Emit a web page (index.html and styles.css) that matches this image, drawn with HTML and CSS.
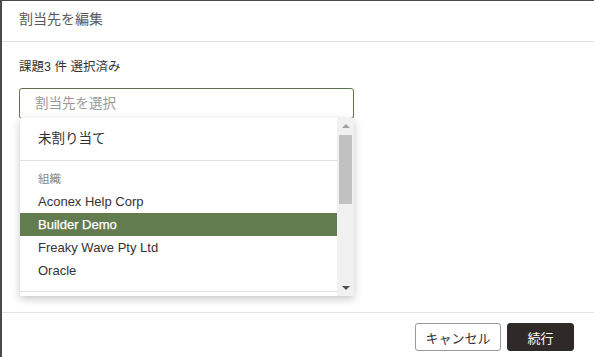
FILE: index.html
```html
<!DOCTYPE html>
<html lang="ja">
<head>
    <meta charset="UTF-8" />
    <meta name="viewport" content="width=device-width, initial-scale=1" />
    <title>割当先を編集</title>
    <link rel="stylesheet" href="styles.css">
</head>
<body>

    <div class="dialogo">
        <div class="cabecera">割当先を編集</div>

        <div class="cuerpo">
            <p class="seleccionados">課題3 件 選択済み</p>

            <div class="selector">
                <div class="campo">割当先を選択</div>

                <div class="menu">
                    <div class="lista">
                        <div class="opcion primera">未割り当て</div>
                        <div class="separador"></div>
                        <div class="grupo">組織</div>
                        <div class="opcion">Aconex Help Corp</div>
                        <div class="opcion activa">Builder Demo</div>
                        <div class="opcion">Freaky Wave Pty Ltd</div>
                        <div class="opcion">Oracle</div>
                        <div class="separador final"></div>
                    </div>
                    <div class="barra">
                        <span class="flecha arriba"></span>
                        <span class="pulgar"></span>
                        <span class="flecha abajo"></span>
                    </div>
                </div>
            </div>
        </div>

        <div class="pie">
            <button class="boton secundario">キャンセル</button>
            <button class="boton primario">続行</button>
        </div>
    </div>

</body>
</html>
```

FILE: styles.css
```css
body {
    font-family: "Liberation Sans", "Noto Sans CJK JP", sans-serif;
    background-color: #4a4a4a;
    margin: 0;
    padding: 1px 0 0 2px;
    color: #333;
    overflow: hidden;
}

.dialogo {
    background-color: white;
    width: 592px;
    height: 356px;
    display: flex;
    flex-direction: column;
}

.cabecera {
    height: 40px;
    line-height: 36px;
    padding-left: 17px;
    font-size: 14px;
    color: #5a5a5a;
    border-bottom: 1px solid #e2e2e2;
}

.cuerpo {
    flex: 1;
    padding: 0 17px;
}

.seleccionados {
    margin: 16px 0 0;
    font-size: 12.5px;
    line-height: 18px;
    color: #333;
}

.selector {
    position: relative;
    width: 335px;
    margin-top: 12px;
}

.campo {
    height: 29px;
    line-height: 29px;
    border: 1px solid #5e7250;
    border-radius: 3px;
    padding-left: 15px;
    font-size: 13.5px;
    color: #999;
}

.menu {
    position: absolute;
    top: 30px;
    left: 1px;
    width: 334px;
    height: 178px;
    background-color: white;
    display: flex;
    box-shadow: 0 3px 8px rgba(0, 0, 0, 0.22);
    overflow: hidden;
}

.lista {
    flex: 1;
}

.opcion {
    height: 23px;
    line-height: 23px;
    padding-left: 18px;
    font-size: 13px;
    color: #333;
}

.opcion.primera {
    height: 42px;
    line-height: 42px;
    font-size: 13.5px;
}

.opcion.activa {
    background-color: #627b4f;
    color: white;
    -webkit-text-stroke: 0.25px white;
}

.separador {
    height: 1px;
    background-color: #e0e0e0;
}

.separador.final {
    margin-top: 9px;
}

.grupo {
    padding: 9px 0 0 18px;
    height: 20px;
    line-height: 18px;
    font-size: 11.5px;
    color: #888;
}

.barra {
    width: 17px;
    background-color: #f1f1f1;
    display: flex;
    flex-direction: column;
    align-items: center;
}

.flecha {
    width: 0;
    height: 0;
    border-left: 4px solid transparent;
    border-right: 4px solid transparent;
}

.flecha.arriba {
    margin-top: 6px;
    border-bottom: 4px solid #a3a3a3;
}

.flecha.abajo {
    margin-top: auto;
    margin-bottom: 6px;
    border-top: 4px solid #505050;
}

.pulgar {
    width: 13px;
    height: 69px;
    margin-top: 7px;
    background-color: #c1c1c1;
}

.pie {
    box-sizing: border-box;
    height: 45px;
    border-top: 1px solid #e2e2e2;
    display: flex;
    justify-content: flex-end;
    align-items: flex-start;
    gap: 6px;
    padding: 10px 20px 0 0;
}

.boton {
    font-family: inherit;
    height: 28px;
    font-size: 13px;
    border-radius: 3px;
    cursor: pointer;
}

.boton.secundario {
    width: 86px;
    background-color: white;
    border: 1px solid #9a9a9a;
    color: #333;
}

.boton.primario {
    width: 67px;
    background-color: #2f2a27;
    border: 1px solid #2f2a27;
    color: white;
}
```
